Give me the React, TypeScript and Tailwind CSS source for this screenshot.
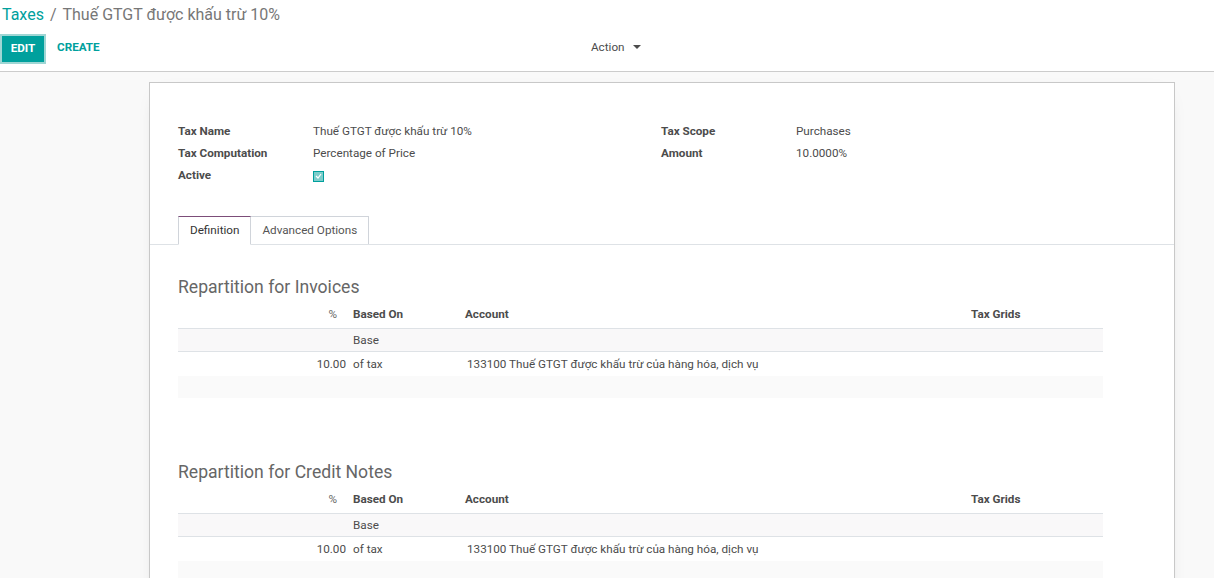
import React from "react";

const font = { fontFamily: "Roboto, 'Noto Sans', sans-serif" };

function RepTable({ title }: { title: string }) {
  return (
    <div>
      <div className="text-[17.6px] text-[#666666] leading-[22px] h-[22px]">{title}</div>
      <div className="mt-[5px] w-[925px]">
        <div className="flex h-[26px] items-center pb-[2px] text-[11.7px] font-bold text-[#4c4c4c] border-b border-[#dee2e6]">
          <div className="w-[173px] text-right pr-[14px] font-normal text-[#666]">%</div>
          <div className="w-[113px] pl-[2px]">Based On</div>
          <div className="w-[506px] pl-[1px]">Account</div>
          <div className="pl-[1px]">Tax Grids</div>
        </div>
        <div className="flex h-[23px] items-center pt-[2px] text-[11.7px] text-[#4c4c4c] bg-[#f9f8f9] border-b border-[#dee2e6]">
          <div className="w-[173px]"></div>
          <div className="w-[113px] pl-[2px]">Base</div>
        </div>
        <div className="flex h-[24px] items-center pt-[2px] text-[11.7px] text-[#4c4c4c] bg-white">
          <div className="w-[173px] text-right pr-[5px]">10.00</div>
          <div className="w-[113px] pl-[2px]">of tax</div>
          <div className="pl-[3px]">133100 Thuế GTGT được khấu trừ của hàng hóa, dịch vụ</div>
        </div>
        <div className="h-[22px] bg-[#fafafa]"></div>
      </div>
    </div>
  );
}

export default function App() {
  return (
    <div style={font} className="w-[1214px] h-[578px] overflow-hidden bg-[#f9f9f9] text-[#4c4c4c]">
      <div className="bg-white border-b border-[#cccccc] h-[72px]">
        <div className="h-[29px] flex items-center pl-[2px] text-[16px] leading-none">
          <span className="text-[#00A09D]">Taxes</span>
          <span className="text-[#777777] mx-[6px]">/</span>
          <span className="text-[#777777]">Thuế GTGT được khấu trừ 10%</span>
        </div>
        <div className="flex items-center h-[37px]">
          <div className="w-[612px] flex items-center">
            <button className="h-[30px] w-[46px] bg-[#00A09D] text-white text-[11.7px] font-bold border-2 border-[#9fd6d4] mt-[2px]">
              EDIT
            </button>
            <span className="ml-[11px] text-[11.7px] font-bold text-[#00A09D]">CREATE</span>
          </div>
          <div className="flex items-center text-[11.7px] text-[#4c4c4c] -ml-[21px]">
            Action
            <span className="ml-[8px] w-0 h-0 border-l-[4px] border-r-[4px] border-t-[4px] border-l-transparent border-r-transparent border-t-[#4c4c4c]"></span>
          </div>
        </div>
      </div>

      <div className="ml-[149px] mt-[10px] w-[1026px] h-[600px] bg-white border border-[#c8c8c8] shadow-[0_5px_20px_-15px_rgba(0,0,0,0.4)]">
        <div className="pt-[38px] px-[28px] flex text-[11.7px]">
          <div className="w-[483px]">
            <div className="flex h-[22px] items-center">
              <div className="w-[135px] font-bold">Tax Name</div>
              <div>Thuế GTGT được khấu trừ 10%</div>
            </div>
            <div className="flex h-[22px] items-center">
              <div className="w-[135px] font-bold">Tax Computation</div>
              <div>Percentage of Price</div>
            </div>
            <div className="flex h-[22px] items-center">
              <div className="w-[135px] font-bold">Active</div>
              <div className="w-[11px] h-[11px] border border-[#00A09D] bg-[#7dcdcb] flex items-center justify-center">
                <svg width="7" height="6" viewBox="0 0 7 6">
                  <path d="M1 3 L3 5 L6 1" stroke="white" strokeWidth="1.2" fill="none" />
                </svg>
              </div>
            </div>
          </div>
          <div>
            <div className="flex h-[22px] items-center">
              <div className="w-[135px] font-bold">Tax Scope</div>
              <div>Purchases</div>
            </div>
            <div className="flex h-[22px] items-center">
              <div className="w-[135px] font-bold">Amount</div>
              <div>10.0000%</div>
            </div>
          </div>
        </div>

        <div className="mt-[29px] border-b border-[#dee2e6] px-[28px] flex h-[29px] items-end">
          <div className="h-[29px] -mb-px px-[11px] flex items-center text-[11.7px] text-[#333] bg-white border border-[#d0d4da] border-b-white border-t-[#7c4d79]">
            Definition
          </div>
          <div className="h-[28px] px-[11px] flex items-center text-[11.7px] text-[#555] border border-l-0 border-[#d0d4da] border-b-0">
            Advanced Options
          </div>
        </div>

        <div className="px-[28px] pt-[31px]">
          <RepTable title="Repartition for Invoices" />
          <div className="h-[63px]"></div>
          <RepTable title="Repartition for Credit Notes" />
        </div>
      </div>
    </div>
  );
}
